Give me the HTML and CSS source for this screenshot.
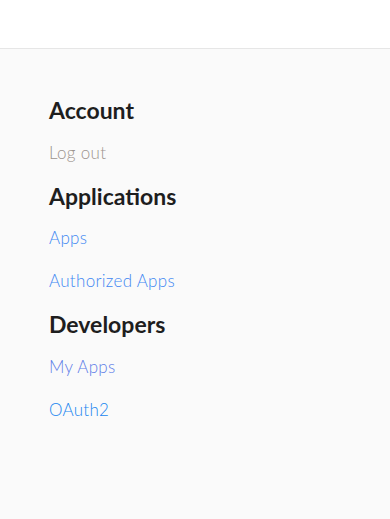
FILE: index.html
```html
<!DOCTYPE html>
<html lang="en">
<head>
    <meta charset="UTF-8">
    <meta name="viewport" content="width=device-width, initial-scale=1.0">
    <title>Settings</title>
    <link rel="stylesheet" href="styles.css">
</head>
<body>
    <header class="top-bar"></header>

    <nav class="settings-nav">
        <h2>Account</h2>
        <a href="#" class="muted">Log out</a>

        <h2>Applications</h2>
        <a href="#">Apps</a>
        <a href="#">Authorized Apps</a>

        <h2>Developers</h2>
        <a href="#" class="current">My Apps</a>
        <a href="#" class="bright">OAuth2</a>
    </nav>
</body>
</html>
```
FILE: styles.css
```css
* {
    margin: 0;
    padding: 0;
    box-sizing: border-box;
}

html, body {
    height: 100%;
}

body {
    font-family: Lato, 'Open Sans', sans-serif;
    background: #fafafa;
}

.top-bar {
    height: 49px;
    background: white;
    border-bottom: 1px solid #e6e6e6;
}

.settings-nav {
    display: flex;
    flex-direction: column;
    align-items: flex-start;
    gap: 18.8px;
    padding: 49px 49px;
}

.settings-nav h2 {
    font-size: 23px;
    line-height: 24px;
    font-weight: 700;
    color: #1e1e1e;
}

.settings-nav a {
    font-size: 17px;
    line-height: 24px;
    font-weight: 300;
    letter-spacing: 0.3px;
    color: #3f88f2;
    text-decoration: none;
}

.settings-nav a.muted {
    color: #9c948e;
}

.settings-nav a.current {
    color: #5f7ee8;
}

.settings-nav a.bright {
    color: #2186f0;
}
```
